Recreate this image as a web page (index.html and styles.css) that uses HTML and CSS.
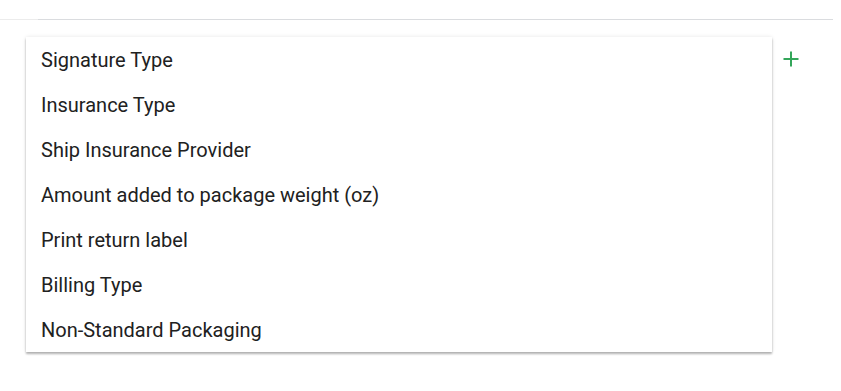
FILE: index.html
```html
<!DOCTYPE html>
<html lang="en">
<head>
    <meta charset="UTF-8">
    <title>Shipping Options</title>
    <link rel="stylesheet" href="styles.css">
</head>
<body>
    <div class="top-rule">
        <div class="top-rule-inner"></div>
    </div>

    <div class="options-row">
        <ul class="option-menu">
            <li>Signature Type</li>
            <li>Insurance Type</li>
            <li>Ship Insurance Provider</li>
            <li>Amount added to package weight (oz)</li>
            <li>Print return label</li>
            <li>Billing Type</li>
            <li>Non-Standard Packaging</li>
        </ul>
        <button class="add-btn" title="Add">
            <svg width="16" height="16" viewBox="0 0 16 16">
                <path d="M8 0.5v15M0.5 8h15" stroke="#34a65a" stroke-width="2" fill="none"/>
            </svg>
        </button>
    </div>
</body>
</html>
```

FILE: styles.css
```css
html, body {
    min-height: 100%;
    height: 100%;
}

body {
    margin: 0;
    font-family: Roboto, "Liberation Sans", Arial, sans-serif;
    background-color: #fff;
}

.top-rule {
    height: 19px;
    border-bottom: 1px solid #ececec;
    display: flex;
    width: 833px;
}

.top-rule-inner {
    margin-left: 38px;
    flex: 1;
    border-bottom: 1px solid #dadcdf;
    margin-bottom: -1px;
}

.options-row {
    display: flex;
    align-items: flex-start;
    padding: 17px 0 40px 26px;
}

.option-menu {
    list-style: none;
    margin: 0;
    padding: 0;
    width: 746px;
    background: #fff;
    box-shadow: 0 2px 2px rgba(0, 0, 0, 0.28), 0 0 4px rgba(0, 0, 0, 0.1);
}

.option-menu li {
    height: 45px;
    padding-top: 1px;
    box-sizing: border-box;
    line-height: 45px;
    padding-left: 15px;
    font-size: 20px;
    color: #212121;
    cursor: pointer;
}

.add-btn {
    background: none;
    border: none;
    padding: 0;
    margin: 14px 0 0 11px;
    width: 16px;
    height: 16px;
    cursor: pointer;
}

.add-btn svg {
    display: block;
}
```
